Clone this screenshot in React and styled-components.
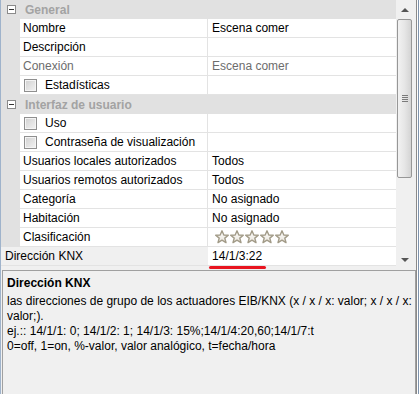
import styled, { createGlobalStyle } from "styled-components";

const GlobalStyle = createGlobalStyle`
  html, body {
    margin: 0;
    padding: 0;
    background: #f0f0f0;
  }
  body {
    font-family: "Liberation Sans", Arial, sans-serif;
    font-size: 12px;
    color: #000;
  }
`;

const rows = [
  { type: "header", label: "General" },
  { label: "Nombre", value: "Escena comer" },
  { label: "Descripción", value: "" },
  { label: "Conexión", value: "Escena comer", disabled: true },
  { label: "Estadísticas", check: true },
  { type: "header", label: "Interfaz de usuario" },
  { label: "Uso", check: true },
  { label: "Contraseña de visualización", check: true },
  { label: "Usuarios locales autorizados", value: "Todos" },
  { label: "Usuarios remotos autorizados", value: "Todos" },
  { label: "Categoría", value: "No asignado" },
  { label: "Habitación", value: "No asignado" },
  { label: "Clasificación", stars: 5 },
];

const descLines = [
  "las direcciones de grupo de los actuadores EIB/KNX (x / x / x: valor; x / x / x:",
  "valor;).",
  "ej.:: 14/1/1: 0; 14/1/2: 1; 14/1/3: 15%;14/1/4:20,60;14/1/7:t",
  "0=off, 1=on, %-valor, valor analógico, t=fecha/hora",
];

const Frame = styled.div`
  width: 419px;
  height: 394px;
  display: flex;
  overflow: hidden;
  background: #f0f0f0;
`;

const LeftEdge = styled.div`
  width: 2px;
  background: #9fb3cb;
`;

const RightEdge = styled.div`
  width: 6px;
  background: linear-gradient(to right, #8a8a8a 0 1px, #ffffff 1px 2px, #7e93ad 2px 4px, #b6cae2 4px);
`;

const Main = styled.div`
  flex: 1;
  display: flex;
  flex-direction: column;
`;

const PropertyArea = styled.div`
  height: 269px;
  display: flex;
`;

const Grid = styled.div`
  width: 395px;
  display: flex;
  flex-direction: column;
  background: #f0f0f0;
`;

const Row = styled.div`
  display: grid;
  grid-template-columns: 19px 188px 188px;
  height: 19px;
`;

const Gutter = styled.div`
  background: #e1e1e1;
`;

const Cell = styled.div`
  background: #fff;
  border-bottom: 1px solid #e3e3e3;
  display: flex;
  align-items: center;
  gap: 8px;
  padding-left: ${(p) => p.$pad || 3}px;
  white-space: nowrap;
  overflow: hidden;
  color: ${(p) => (p.$disabled ? "#6d6d6d" : "#000")};
`;

const LabelCell = styled(Cell)`
  border-right: 1px solid #e3e3e3;
`;

const HeaderRow = styled.div`
  height: 19px;
  background: #e1e1e1;
  display: flex;
  align-items: center;
  padding-left: 6px;
  gap: 9px;
  font-weight: bold;
  color: #a3a3a3;
`;

const MinusBox = styled.span`
  width: 9px;
  height: 9px;
  box-sizing: border-box;
  border: 1px solid #8a8a8a;
  background: #fff;
  position: relative;
  &::after {
    content: "";
    position: absolute;
    left: 1px;
    right: 1px;
    top: 3px;
    height: 1px;
    background: #333;
  }
`;

const Check = styled.span`
  width: 13px;
  height: 13px;
  box-sizing: border-box;
  border: 1px solid #8f8f8f;
  box-shadow: inset 0 0 0 1px #f4f4f4;
  background: linear-gradient(135deg, #d0d0d0, #f3f3f3);
  flex: none;
`;

const KnxRow = styled.div`
  display: grid;
  grid-template-columns: 207px 188px;
  height: 19px;
`;

const KnxLabel = styled.div`
  background: #f0f0f0;
  border-bottom: 1px solid #e3e3e3;
  display: flex;
  align-items: center;
  padding-left: 4px;
`;

const KnxValue = styled(Cell)`
  padding-left: 4px;
  overflow: visible;
`;

const Marked = styled.span`
  position: relative;
  &::after {
    content: "";
    position: absolute;
    left: -3px;
    right: -4px;
    bottom: -6px;
    height: 3px;
    border-radius: 2px;
    background: #e8141f;
  }
`;

const Stars = styled.div`
  display: flex;
  gap: 1px;
  padding-left: 3px;
`;

const Scrollbar = styled.div`
  width: 17px;
  display: flex;
  flex-direction: column;
  align-items: center;
  background: #f0f0f0;
`;

const Arrow = styled.div`
  height: 19px;
  width: 100%;
  display: flex;
  align-items: center;
  justify-content: center;
  &::before {
    content: "";
    border-left: 4px solid transparent;
    border-right: 4px solid transparent;
    ${(p) => (p.$down ? "border-top: 4px solid #555;" : "border-bottom: 4px solid #555;")}
  }
`;

const Thumb = styled.div`
  width: 15px;
  height: 159px;
  box-sizing: border-box;
  border: 1px solid #979797;
  border-radius: 2px;
  background: linear-gradient(to right, #f2f2f2, #e6e6e6 50%, #d4d4d4);
  display: flex;
  align-items: center;
  justify-content: center;
`;

const Grip = styled.div`
  width: 6px;
  height: 7px;
  background: repeating-linear-gradient(to bottom, #7a7a7a 0 1px, transparent 1px 2px);
`;

const Track = styled.div`
  flex: 1;
`;

const Description = styled.div`
  flex: 1;
  margin-top: 1px;
  margin-left: 1px;
  border: 1px solid #a0a0a0;
  border-bottom: none;
  padding: 5px 3px 0 4px;
  line-height: 15px;
  background: #f0f0f0;
  white-space: nowrap;
  overflow: hidden;
`;

const DescTitle = styled.div`
  font-weight: bold;
  margin-bottom: 3px;
`;

const StarIcon = () => (
  <svg width="14" height="14" viewBox="0 0 14 14">
    <defs>
      <linearGradient id="sg" x1="0" y1="0" x2="0" y2="1">
        <stop offset="0" stopColor="#ffffff" />
        <stop offset="1" stopColor="#e8e4da" />
      </linearGradient>
    </defs>
    <polygon
      points="7,0.8 8.8,5 13.3,5.2 9.8,8.1 11,12.6 7,10.1 3,12.6 4.2,8.1 0.7,5.2 5.2,5"
      fill="url(#sg)"
      stroke="#a29b88"
      strokeWidth="1.4"
      strokeLinejoin="round"
    />
  </svg>
);

const App = () => (
  <>
    <GlobalStyle />
    <Frame>
      <LeftEdge />
      <Main>
        <PropertyArea>
          <Grid>
            {rows.map((r, i) =>
              r.type === "header" ? (
                <HeaderRow key={i}>
                  <MinusBox />
                  {r.label}
                </HeaderRow>
              ) : (
                <Row key={i}>
                  <Gutter />
                  <LabelCell $disabled={r.disabled} $pad={r.check ? 4 : 3}>
                    {r.check && <Check />}
                    {r.label}
                  </LabelCell>
                  <Cell $disabled={r.disabled} $pad={4}>
                    {r.stars ? (
                      <Stars>
                        {Array.from({ length: r.stars }).map((_, s) => (
                          <StarIcon key={s} />
                        ))}
                      </Stars>
                    ) : (
                      r.value
                    )}
                  </Cell>
                </Row>
              )
            )}
            <KnxRow>
              <KnxLabel>Dirección KNX</KnxLabel>
              <KnxValue>
                <Marked>14/1/3:22</Marked>
              </KnxValue>
            </KnxRow>
          </Grid>
          <Scrollbar>
            <Arrow />
            <Thumb>
              <Grip />
            </Thumb>
            <Track />
            <Arrow $down />
          </Scrollbar>
        </PropertyArea>
        <Description>
          <DescTitle>Dirección KNX</DescTitle>
          {descLines.map((line, i) => (
            <div key={i}>{line}</div>
          ))}
        </Description>
      </Main>
      <RightEdge />
    </Frame>
  </>
);

export default App;
